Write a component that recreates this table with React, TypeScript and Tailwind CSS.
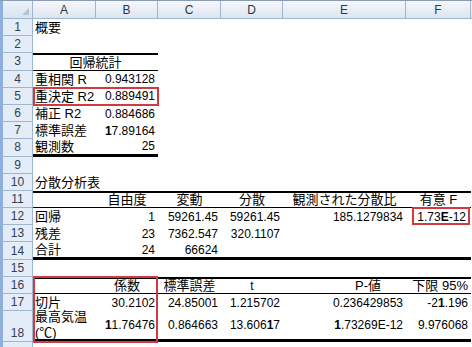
import type { ReactNode } from "react";

type Line = "thick" | "thin" | undefined;
type Cell = { v?: ReactNode; a?: "l" | "r" | "c"; t?: Line; b?: Line; cls?: string };

const colW = ["w-[63px]", "w-[62px]", "w-[63px]", "w-[62px]", "w-[123px]", "w-[65px]"];
const letters = ["A", "B", "C", "D", "E", "F"];

const isJp = (v: ReactNode) => typeof v === "string" && /[\u3000-\u9fff\uff00-\uffef]/.test(v);

// one table row: cells A..F, with the same border on every cell
function line(vals: (Cell | string | undefined)[], t?: Line, b?: Line, n = 6): Cell[] {
  const out: Cell[] = [];
  for (let i = 0; i < n; i++) {
    const x = vals[i];
    const c: Cell = typeof x === "object" ? { ...x } : { v: x, a: i === 0 ? "l" : "r" };
    if (t) c.t = t;
    if (b) c.b = b;
    out.push(c);
  }
  return out;
}

const head = (s: string): Cell => ({ v: s, a: "c" });

const rows: { cells: Cell[]; merged?: Cell }[] = [
  { cells: line(["概要"], undefined, undefined, 1) },
  { cells: [] },
  { cells: [], merged: { v: "回帰統計", a: "c", t: "thick", b: "thin" } },
  { cells: line(["重相関 R", "0.943128"], undefined, undefined, 2) },
  { cells: line(["重決定 R2", "0.889491"], undefined, undefined, 2) },
  { cells: line(["補正 R2", "0.884686"], undefined, undefined, 2) },
  {
    cells: line(
      ["標準誤差", { v: <><b>1</b>7.89164</>, a: "r" }],
      undefined,
      undefined,
      2
    ),
  },
  { cells: line(["観測数", "25"], undefined, "thick", 2) },
  { cells: [] },
  { cells: line(["分散分析表"], undefined, undefined, 1) },
  {
    cells: line(
      [{ v: "" }, head("自由度"), head("変動"), head("分散"), head("観測された分散比"), head("有意 F")],
      "thick",
      "thin"
    ),
  },
  {
    cells: line([
      "回帰",
      "1",
      "59261.45",
      "59261.45",
      "185.1279834",
      { v: <>1.73<b>E</b>-12</>, a: "r", cls: "pr-[5px]" },
    ]),
  },
  { cells: line(["残差", "23", "7362.547", "320.1107"]) },
  { cells: line(["合計", "24", "66624"], undefined, "thick") },
  { cells: [] },
  {
    cells: line(
      [
        { v: "" },
        head("係数"),
        head("標準誤差"),
        head("t"),
        { v: "P-値", a: "l", cls: "pl-[72px]" },
        { v: "下限 95%", a: "r" },
      ],
      "thick",
      "thin"
    ),
  },
  {
    cells: line([
      "切片",
      "30.2102",
      "24.85001",
      "1.215702",
      "0.236429853",
      { v: <>-2<b>1</b>.196</>, a: "r" },
    ]),
  },
  {
    cells: line(
      [
        { v: <>最高気温<br />(℃)</>, a: "l", cls: "text-[13px] leading-[16px]" },
        { v: <><b>1</b>1.76476</>, a: "r" },
        "0.864663",
        { v: <>13.606<b>1</b>7</>, a: "r" },
        { v: <><b>1</b>.73269E-12</>, a: "r" },
        "9.976068",
      ],
      undefined,
      "thick"
    ),
  },
  { cells: [] },
];

function SheetCell({ c, w }: { c: Cell; w: string }) {
  const top = c.t === "thick" ? "border-t-2 border-t-black" : "";
  const bot =
    c.b === "thick" ? "border-b-[3px] border-b-black" : c.b === "thin" ? "border-b border-b-black" : "";
  const align =
    c.a === "r" ? "justify-end pr-[3px]" : c.a === "c" ? "justify-center" : "justify-start pl-[2px]";
  const size = isJp(c.v) ? "text-[13px]" : "";
  return (
    <div className={`${w} shrink-0 h-full flex items-center whitespace-nowrap ${top} ${bot} ${align} ${size} ${c.cls ?? ""}`}>
      {c.v}
    </div>
  );
}

function RowHeader({ n, tall }: { n: number; tall?: boolean }) {
  return (
    <div
      className={`w-[33px] shrink-0 h-full flex justify-center bg-[#e4ecf7] border-l-[3px] border-l-[#8fb0dd] border-r border-r-[#9eb6ce] border-b border-b-[#9eb6ce] text-[12px] text-[#2f4256] ${
        tall ? "items-end pb-[2px]" : "items-center"
      }`}
    >
      {n < 19 ? n : ""}
    </div>
  );
}

export default function App() {
  return (
    <div className="relative w-[472px] h-[347px] overflow-hidden bg-white text-black text-[12px] leading-none font-['Liberation_Sans','Noto_Sans_CJK_JP',sans-serif]">
      {/* column headers */}
      <div className="flex h-[19px] border-t border-t-[#8a9cb4]">
        <div className="relative w-[33px] shrink-0 bg-gradient-to-b from-[#eef2f8] to-[#dae3ee] border-l-[3px] border-l-[#8fb0dd] border-r border-r-[#9eb6ce] border-b border-b-[#9eb6ce]">
          <svg className="absolute right-[3px] bottom-[3px]" width="7" height="7" viewBox="0 0 7 7">
            <polygon points="7,0 7,7 0,7" fill="#b4c4d8" />
          </svg>
        </div>
        {letters.map((l, i) => (
          <div
            key={l}
            className={`${colW[i]} shrink-0 flex items-center justify-center bg-gradient-to-b from-[#f5f8fc] to-[#dde5ef] border-r border-r-[#9eb6ce] border-b border-b-[#9eb6ce] text-[#27384a]`}
          >
            {l}
          </div>
        ))}
        <div className="flex-1 bg-gradient-to-b from-[#f5f8fc] to-[#dde5ef] border-b border-b-[#9eb6ce]" />
      </div>

      {rows.map((r, i) => {
        const n = i + 1;
        const h = n === 18 ? "h-[31px]" : n === 19 ? "h-[20px]" : "h-[17.2px]";
        return (
          <div key={n} className={`flex ${h}`}>
            <RowHeader n={n} tall={n === 18} />
            {r.merged && <SheetCell c={r.merged} w="w-[125px]" />}
            {r.cells.map((c, j) => (
              <SheetCell key={j} c={c} w={colW[j]} />
            ))}
          </div>
        );
      })}

      {/* highlight boxes */}
      <div className="absolute left-[33px] top-[87px] w-[126px] h-[19px] border-2 border-[#d23a3f] pointer-events-none" />
      <div className="absolute left-[412px] top-[207px] w-[58px] h-[18px] border-2 border-[#d23a3f] pointer-events-none" />
      <div className="absolute left-[33px] top-[276px] w-[125px] h-[67px] border-2 border-[#d23a3f] pointer-events-none" />
    </div>
  );
}
